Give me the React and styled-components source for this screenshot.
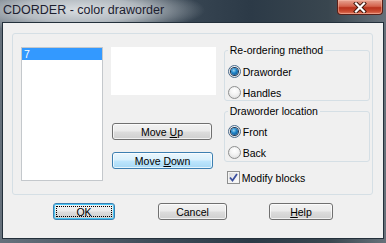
import React from 'react'
import styled, { createGlobalStyle, css } from 'styled-components'

const GlobalStyle = createGlobalStyle`
  html, body {
    margin: 0;
    padding: 0;
    background: #2c3a47;
  }
  body {
    font-family: 'Liberation Sans', Arial, sans-serif;
  }
`

const Window = styled.div`
  width: 386px;
  height: 243px;
  box-sizing: border-box;
  display: flex;
  flex-direction: column;
  padding: 0 2px 4px 2px;
  background:
    radial-gradient(ellipse 125px 24px at 80px 10px, rgba(222, 226, 229, 0.97) 0%, rgba(196, 202, 207, 0.85) 50%, rgba(70, 84, 98, 0) 100%),
    linear-gradient(90deg, #66717c 0%, #3a4855 45%, #2c3a47 65%, #39464f 85%, #67717a 100%);
`

const TitleBar = styled.div`
  height: 22px;
  display: flex;
  align-items: flex-start;
  justify-content: space-between;
  flex: 0 0 22px;
`

const Title = styled.span`
  font-size: 12.5px;
  color: #1c2030;
  padding: 3px 0 0 1px;
  white-space: nowrap;
`

const CloseButton = styled.div`
  width: 46px;
  height: 15px;
  margin-right: 1px;
  box-sizing: border-box;
  border: 1px solid #5a2018;
  border-top: none;
  border-radius: 0 0 4px 4px;
  background: linear-gradient(180deg, #e7a493 0%, #d4634c 45%, #b8321c 55%, #c94a30 80%, #e07a60 100%);
  box-shadow: inset 0 0 0 1px rgba(255, 200, 180, 0.45);
  display: flex;
  align-items: center;
  justify-content: center;
`

const Client = styled.div`
  flex: 1;
  border: 1px solid #23303b;
  background: #f0f0f0;
  display: flex;
  flex-direction: column;
`

const Panel = styled.div`
  margin: 10px 0 0 9px;
  width: 361px;
  height: 162px;
  box-sizing: border-box;
  border: 1px solid #d5dfe5;
  border-radius: 3px;
  padding: 13px 2px 0 8px;
  display: flex;
  align-items: flex-start;
  gap: 8px;
`

const ListBox = styled.div`
  width: 83px;
  height: 134px;
  box-sizing: border-box;
  border: 1px solid #c4c8cc;
  background: #fff;
`

const ListItem = styled.div`
  height: 12px;
  line-height: 12px;
  font-size: 10.5px;
  padding-left: 2px;
  color: ${({ selected }) => (selected ? '#fff' : '#000')};
  background: ${({ selected }) => (selected ? '#3399ff' : 'transparent')};
`

const MiddleColumn = styled.div`
  width: 106px;
  display: flex;
  flex-direction: column;
`

const Preview = styled.div`
  height: 48px;
  background: #fff;
`

const buttonBase = css`
  box-sizing: border-box;
  height: 17px;
  font-family: 'Liberation Sans', Arial, sans-serif;
  font-size: 10.5px;
  color: #000;
  border: 1px solid #707070;
  border-radius: 3px;
  padding: 0;
  position: relative;
  display: flex;
  align-items: center;
  justify-content: center;
  background: linear-gradient(180deg, #f2f2f2 0%, #ebebeb 48%, #dddddd 52%, #cfcfcf 100%);
  box-shadow: inset 0 0 0 1px rgba(255, 255, 255, 0.7);
`

const Button = styled.div`
  ${buttonBase};
  width: ${({ width }) => width}px;
  margin-top: ${({ top }) => top || 0}px;
  margin-left: ${({ left }) => left || 0}px;

  ${({ hover }) =>
    hover &&
    css`
      border-color: #3c7fb1;
      background: linear-gradient(180deg, #eaf6fd 0%, #d9f0fc 48%, #bee6fd 52%, #a7d9f5 100%);
    `}

  ${({ primary }) =>
    primary &&
    css`
      border-color: #3c7fb1;
      box-shadow: inset 0 0 0 1px #48c6f5;
      &::after {
        content: '';
        position: absolute;
        inset: 2px;
        border: 1px dotted #000;
      }
    `}
`

const RightColumn = styled.div`
  width: 148px;
  margin-top: -3px;
  display: flex;
  flex-direction: column;
`

const Group = styled.fieldset`
  margin: ${({ top }) => top || 0}px 0 0 0;
  padding: 0 0 ${({ bottom }) => bottom || 0}px 3px;
  border: 1px solid #d5dfe5;
  border-radius: 3px;
  min-width: 0;
`

const Legend = styled.legend`
  font-size: 10.5px;
  line-height: 13px;
  height: 13px;
  padding: 0 2px;
  color: #000;
`

const Options = styled.div`
  display: flex;
  flex-direction: column;
  gap: 8px;
  margin-top: ${({ top }) => top}px;
`

const Option = styled.label`
  display: flex;
  align-items: center;
  gap: 2px;
  height: 13px;
  font-size: 10.5px;
  color: #000;
`

const Radio = styled.span`
  width: 13px;
  height: 13px;
  box-sizing: border-box;
  border-radius: 50%;
  border: 1px solid #8e8f8f;
  background: radial-gradient(circle at 50% 35%, #ffffff 0%, #f4f4f4 40%, #d8d8d8 100%);
  display: flex;
  align-items: center;
  justify-content: center;

  ${({ checked }) =>
    checked &&
    css`
      border-color: #4a6a8a;
      &::after {
        content: '';
        width: 7px;
        height: 7px;
        border-radius: 50%;
        background: radial-gradient(circle at 40% 35%, #9fd6f5 0%, #1f86c8 40%, #0b3f78 100%);
        box-shadow: 0 0 0 1px #1b3553;
      }
    `}
`

const CheckRow = styled(Option)`
  margin: 9px 0 0 3px;
`

const CheckBox = styled.span`
  width: 13px;
  height: 13px;
  box-sizing: border-box;
  border: 1px solid #8e8f8f;
  background: linear-gradient(135deg, #d6d6d6 0%, #f2f2f2 60%, #ffffff 100%);
  box-shadow: inset 0 0 0 1px #f4f4f4;
  display: flex;
  align-items: center;
  justify-content: center;
`

const ButtonRow = styled.div`
  display: flex;
  margin-top: 8px;
  padding-left: 50px;
`

const Mnemonic = styled.u`
  text-decoration: underline;
  text-underline-offset: 1px;
`

const CloseIcon = () => (
  <svg width="14" height="11" viewBox="0 0 14 11">
    <path d="M3 1.5 L11 9.5 M11 1.5 L3 9.5" stroke="#3a1208" strokeWidth="4" strokeLinecap="square" />
    <path d="M3 1.5 L11 9.5 M11 1.5 L3 9.5" stroke="#ffffff" strokeWidth="2.2" strokeLinecap="square" />
  </svg>
)

const CheckMark = () => (
  <svg width="9" height="9" viewBox="0 0 9 9">
    <path d="M1 4.5 L3.5 7.5 L8 1" fill="none" stroke="#3b4f9e" strokeWidth="1.8" />
  </svg>
)

const App = () => (
  <>
    <GlobalStyle />
    <Window>
      <TitleBar>
        <Title>CDORDER - color draworder</Title>
        <CloseButton>
          <CloseIcon />
        </CloseButton>
      </TitleBar>
      <Client>
        <Panel>
          <ListBox>
            <ListItem selected>7</ListItem>
          </ListBox>
          <MiddleColumn>
            <Preview />
            <Button width={100} top={28} left={1}>
              Move&nbsp;<Mnemonic>U</Mnemonic>p
            </Button>
            <Button width={101} top={12} left={1} hover>
              Move&nbsp;<Mnemonic>D</Mnemonic>own
            </Button>
          </MiddleColumn>
          <RightColumn>
            <Group bottom={1}>
              <Legend>Re-ordering method</Legend>
              <Options top={8}>
                <Option>
                  <Radio checked />
                  Draworder
                </Option>
                <Option>
                  <Radio />
                  Handles
                </Option>
              </Options>
            </Group>
            <Group top={4} bottom={2}>
              <Legend>Draworder location</Legend>
              <Options top={7}>
                <Option>
                  <Radio checked />
                  Front
                </Option>
                <Option>
                  <Radio />
                  Back
                </Option>
              </Options>
            </Group>
            <CheckRow>
              <CheckBox>
                <CheckMark />
              </CheckBox>
              Modify blocks
            </CheckRow>
          </RightColumn>
        </Panel>
        <ButtonRow>
          <Button width={62} primary>OK</Button>
          <Button width={69} left={43}>Cancel</Button>
          <Button width={64} left={42}>
            <Mnemonic>H</Mnemonic>elp
          </Button>
        </ButtonRow>
      </Client>
    </Window>
  </>
)

export default App
